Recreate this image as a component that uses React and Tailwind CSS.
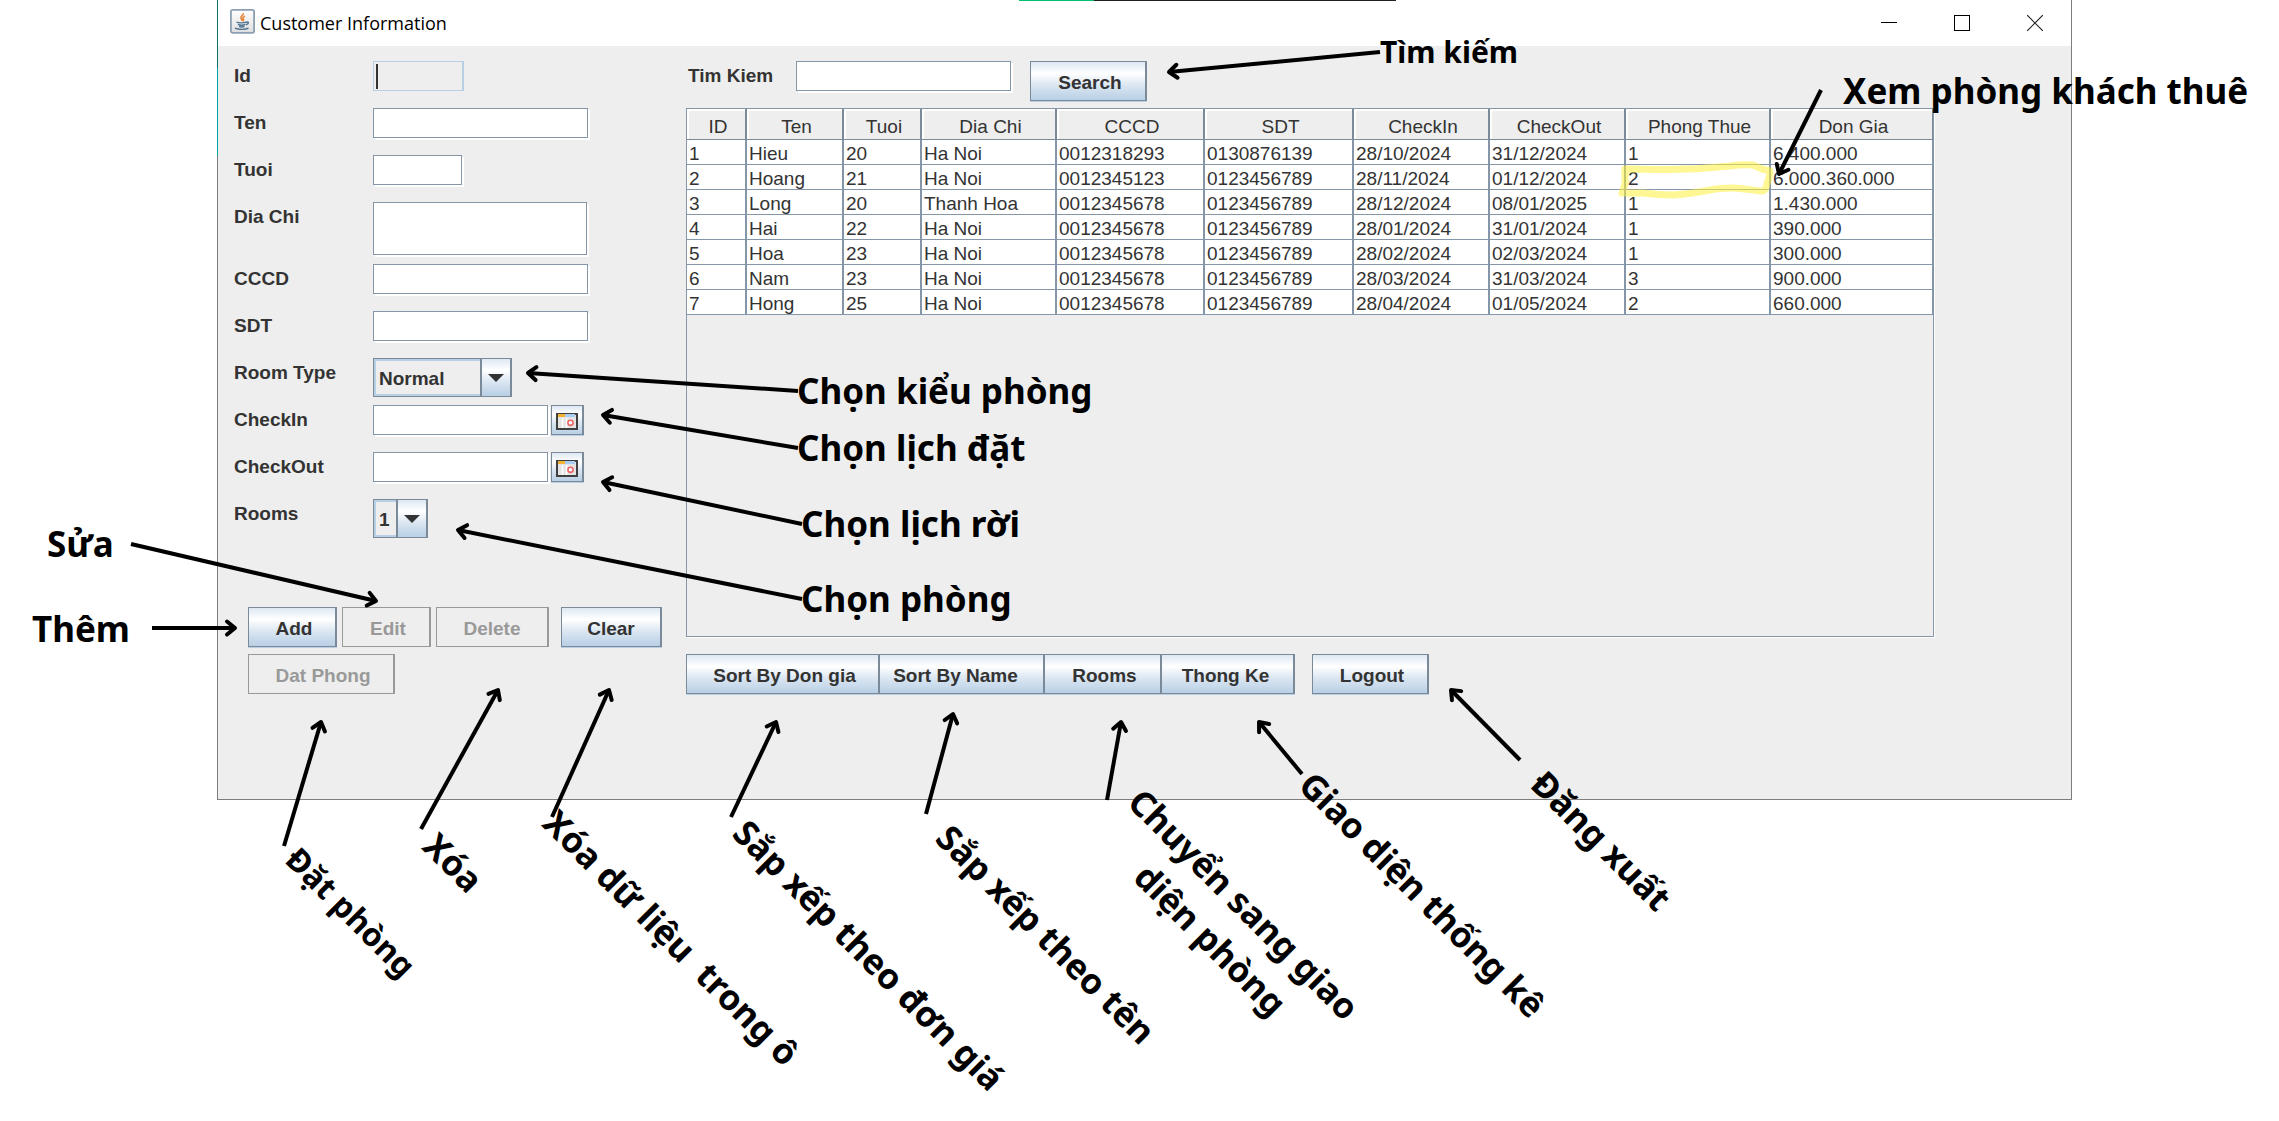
import React from "react";

const columns = [
  { name: "ID", width: "w-[60px]" },
  { name: "Ten", width: "w-[97px]" },
  { name: "Tuoi", width: "w-[78px]" },
  { name: "Dia Chi", width: "w-[135px]" },
  { name: "CCCD", width: "w-[148px]" },
  { name: "SDT", width: "w-[149px]" },
  { name: "CheckIn", width: "w-[136px]" },
  { name: "CheckOut", width: "w-[136px]" },
  { name: "Phong Thue", width: "w-[145px]" },
  { name: "Don Gia", width: "w-auto" },
];

const rows = [
  ["1", "Hieu", "20", "Ha Noi", "0012318293", "0130876139", "28/10/2024", "31/12/2024", "1", "6.400.000"],
  ["2", "Hoang", "21", "Ha Noi", "0012345123", "0123456789", "28/11/2024", "01/12/2024", "2", "6.000.360.000"],
  ["3", "Long", "20", "Thanh Hoa", "0012345678", "0123456789", "28/12/2024", "08/01/2025", "1", "1.430.000"],
  ["4", "Hai", "22", "Ha Noi", "0012345678", "0123456789", "28/01/2024", "31/01/2024", "1", "390.000"],
  ["5", "Hoa", "23", "Ha Noi", "0012345678", "0123456789", "28/02/2024", "02/03/2024", "1", "300.000"],
  ["6", "Nam", "23", "Ha Noi", "0012345678", "0123456789", "28/03/2024", "31/03/2024", "3", "900.000"],
  ["7", "Hong", "25", "Ha Noi", "0012345678", "0123456789", "28/04/2024", "01/05/2024", "2", "660.000"],
];

const notes = [
  { text: "Chọn kiểu phòng", place: "left-[797px] top-[367px]" },
  { text: "Chọn lịch đặt", place: "left-[797px] top-[424px]" },
  { text: "Chọn lịch rời", place: "left-[801px] top-[500px]" },
  { text: "Chọn phòng", place: "left-[801px] top-[575px]" },
  { text: "Xem phòng khách thuê", place: "left-[1843px] top-[67px]" },
  { text: "Sửa", place: "left-[47px] top-[520px]" },
  { text: "Thêm", place: "left-[32px] top-[605px]" },
];

const slantedNotes = [
  { text: "Đặt phòng", place: "left-[292px] top-[829px] text-[32px]" },
  { text: "Xóa", place: "left-[430px] top-[815px] text-[35px]" },
  { text: "Xóa dữ liệu  trong ô", place: "left-[550px] top-[792px] text-[35px]" },
  { text: "Sắp xếp theo đơn giá", place: "left-[740px] top-[802px] text-[35px]" },
  { text: "Sắp xếp theo tên", place: "left-[943px] top-[807px] text-[35px]" },
  { text: "Chuyển sang giao", place: "left-[1135px] top-[771px] text-[35px]" },
  { text: "diện phòng", place: "left-[1141px] top-[846px] text-[35px]" },
  { text: "Giao diện thống kê", place: "left-[1306px] top-[754px] text-[35px]" },
  { text: "Đăng xuất", place: "left-[1538px] top-[753px] text-[35px]" },
];

const arrows = [
  [1380, 52, 1169, 72],
  [1821, 90, 1779, 174],
  [798, 391, 528, 373],
  [798, 448, 603, 415],
  [802, 524, 603, 482],
  [802, 599, 458, 530],
  [131, 544, 376, 601],
  [152, 628, 235, 628],
  [284, 846, 321, 722],
  [421, 829, 498, 690],
  [552, 817, 609, 690],
  [731, 817, 776, 722],
  [926, 814, 953, 714],
  [1107, 800, 1121, 722],
  [1302, 774, 1259, 722],
  [1520, 760, 1451, 690],
];

function Arrow({ line }) {
  const [x1, y1, x2, y2] = line;
  const length = Math.hypot(x2 - x1, y2 - y1);
  const angle = (Math.atan2(y2 - y1, x2 - x1) * 180) / Math.PI;
  return (
    <g transform={`translate(${x1} ${y1}) rotate(${angle})`} fill="none" stroke="#000" strokeWidth="4">
      <path d={`M0 0H${length}`} />
      <path d={`M${length - 8} -6.5L${length} 0L${length - 8} 6.5`} strokeLinecap="round" strokeLinejoin="round" />
    </g>
  );
}

function JavaIcon() {
  return (
    <svg className="h-[25px] w-[25px]" viewBox="0 0 25 25" aria-hidden="true">
      <defs>
        <linearGradient id="java-bg" x1="0" y1="0" x2="0" y2="1">
          <stop offset="0" stopColor="#fff" />
          <stop offset="1" stopColor="#dedede" />
        </linearGradient>
      </defs>
      <rect x="0.9" y="0.9" width="23.2" height="23" rx="1.8" fill="url(#java-bg)" stroke="#8ba0b3" strokeWidth="1.8" />
      <path d="M12.8 4.3c1.8 1.7-3.2 3-1.8 5.2.5.8 1.4 1.4 1 2.6M15 7.2c-2.4 1-2.6 2-1.7 2.9.6.7.2 1.5-.6 2" fill="none" stroke="#e8873a" strokeWidth="1.6" />
      <path d="M6.5 13.2c2 .9 7.5.9 9.7 0M8 15.4c2 .8 5.6.8 7.3 0M9 17.4c1.6.6 4 .6 5.5 0M16.3 13.2c3-.8 2.6 2-.4 2.6" fill="none" stroke="#4f7391" strokeWidth="1.4" />
      <path d="M5 19.2c3 1.6 11 1.5 13.5 0" fill="none" stroke="#4f7391" strokeWidth="1.4" />
    </svg>
  );
}

function CalendarIcon() {
  return (
    <svg className="h-[17px] w-[22px]" viewBox="0 0 22 17" aria-hidden="true">
      <rect x="1" y="1" width="20" height="15" fill="#e4e4e4" stroke="#3f3f3f" strokeWidth="2" />
      <rect x="2" y="1" width="7" height="3" fill="#f5b335" />
      <rect x="9" y="1" width="10" height="3" fill="#a9ccf5" />
      <path d="M6.5 5v10M10.5 5v10" stroke="#fff" strokeWidth="1.5" />
      <circle cx="14.5" cy="9.8" r="2.6" fill="#fff" stroke="#ef6666" strokeWidth="1.6" />
    </svg>
  );
}

const face = "bg-[linear-gradient(to_bottom,#dde8f3_0%,#ffffff_30%,#dce7f2_60%,#b8cfe5_100%)]";
const fieldStyle = "border border-[#8496a8] bg-white px-1 text-[19px] outline-none shadow-[2px_2px_0_#fff]";

function Button({ children, className = "", disabled }) {
  const tone = disabled
    ? "border-[#999999] text-[#999999]"
    : "border-[#7a8a99] text-[#333333] shadow-[0_1px_0_#b8cfe5] " + face;
  return (
    <button type="button" disabled={disabled} className={`h-10 border border-r-2 pt-[3px] text-[19px] leading-6 font-bold ${tone} ${className}`}>
      {children}
    </button>
  );
}

function Row({ id, label, tall, children }) {
  return (
    <div className={`flex items-start ${tall ? "h-[62px]" : "h-[47px]"}`}>
      <label htmlFor={id} className="w-[139px] shrink-0 font-bold leading-[30px]">
        {label}
      </label>
      {children}
    </div>
  );
}

function Combo({ id, width, options }) {
  return (
    <div className={`relative h-[39px] ${width}`}>
      <select id={id} className="h-full w-full appearance-none border border-r-2 border-[#7a8a99] bg-[#eeeeee] pt-[3px] pl-[5px] text-[19px] font-bold text-[#333333] outline-none shadow-[inset_1px_1px_0_1px_#b8cfe5,inset_0_-2px_0_#b8cfe5]">
        {options.map((o) => (
          <option key={o}>{o}</option>
        ))}
      </select>
      <span className={`pointer-events-none absolute top-px right-[2px] bottom-px flex w-[30px] items-center justify-center border-l-2 border-[#7a8a99] ${face}`}>
        <svg className="h-2 w-4" viewBox="0 0 16 8" aria-hidden="true">
          <path d="M0 0H16L8 8Z" fill="#333" />
        </svg>
      </span>
    </div>
  );
}

function DateField({ id, label }) {
  return (
    <Row id={id} label={label}>
      <input id={id} type="text" className={`h-[30px] w-[175px] ${fieldStyle}`} />
      <button type="button" aria-label={`${label} calendar`} className={`ml-[3px] flex h-[30px] w-[33px] items-center justify-center border border-r-2 border-[#7a8a99] pt-0.5 shadow-[0_1px_0_#b8cfe5] ${face}`}>
        <CalendarIcon />
      </button>
    </Row>
  );
}

export default function App() {
  return (
    <div className="relative min-h-screen overflow-hidden bg-white">
      <div className="flex pr-[207px]">
        <div className="flex w-[218px] shrink-0 flex-col items-end" aria-hidden="true">
          <div className="h-[68px] w-px bg-[#0b6f70]" />
          <div className="h-[88px] w-px bg-[#00a5a5]" />
          <div className="w-px grow bg-[#7d7d7d]" />
        </div>
        <main className="min-w-0 grow border-r border-b border-[#7d7d7d] bg-[#eeeeee] font-['Liberation_Sans',Arial,sans-serif] text-[19px] text-[#333333]">
          <header className="flex h-[46px] items-center bg-white pl-3">
            <div className="-mt-1 flex items-center gap-[5px]">
              <JavaIcon />
              <h1 className="pt-[3px] font-['Open_Sans','Segoe_UI',sans-serif] text-[18px] leading-6 text-black">Customer Information</h1>
            </div>
            <div className="mr-7 ml-auto flex gap-[57px]">
              <button type="button" aria-label="Minimize">
                <svg className="h-4 w-4" viewBox="0 0 16 16"><path d="M0 7.5H16" stroke="#000" /></svg>
              </button>
              <button type="button" aria-label="Maximize">
                <svg className="h-4 w-4" viewBox="0 0 16 16"><rect x="0.5" y="0.5" width="15" height="15" fill="none" stroke="#000" /></svg>
              </button>
              <button type="button" aria-label="Close">
                <svg className="h-4 w-4" viewBox="0 0 16 16"><path d="M0 0L16 16M16 0L0 16" stroke="#222" strokeWidth="1.2" /></svg>
              </button>
            </div>
          </header>

          <div className="flex pt-[15px] pb-[105px]">
            <form className="w-[468px] shrink-0 pl-4">
              <Row id="id" label="Id">
                <div className="relative">
                  <input id="id" type="text" readOnly className="block h-[30px] w-[91px] border border-r-2 border-[#b8cfe5] bg-[#eeeeee] px-1 outline-none" />
                  <span className="pointer-events-none absolute top-[3px] left-[3px] h-[25px] w-0.5 bg-[#333333]" />
                </div>
              </Row>
              <Row id="ten" label="Ten">
                <input id="ten" type="text" className={`h-[30px] w-[215px] ${fieldStyle}`} />
              </Row>
              <Row id="tuoi" label="Tuoi">
                <input id="tuoi" type="text" className={`h-[30px] w-[89px] ${fieldStyle}`} />
              </Row>
              <Row id="diachi" label="Dia Chi" tall>
                <textarea id="diachi" className={`h-[53px] w-[214px] resize-none ${fieldStyle}`} />
              </Row>
              <Row id="cccd" label="CCCD">
                <input id="cccd" type="text" className={`h-[30px] w-[215px] ${fieldStyle}`} />
              </Row>
              <Row id="sdt" label="SDT">
                <input id="sdt" type="text" className={`h-[30px] w-[215px] ${fieldStyle}`} />
              </Row>
              <Row id="roomtype" label="Room Type">
                <Combo id="roomtype" width="w-[139px]" options={["Normal", "Vip"]} />
              </Row>
              <DateField id="checkin" label="CheckIn" />
              <DateField id="checkout" label="CheckOut" />
              <Row id="rooms" label="Rooms">
                <Combo id="rooms" width="w-[55px]" options={["1", "2", "3"]} />
              </Row>
              <div className="mt-[61px] flex gap-[5px] pl-3.5">
                <Button className="w-[89px] pl-1">Add</Button>
                <Button className="w-[89px] pl-1" disabled>Edit</Button>
                <Button className="w-[113px]" disabled>Delete</Button>
                <Button className="ml-[7px] w-[101px]">Clear</Button>
              </div>
              <div className="mt-[7px] pl-3.5">
                <Button className="w-[147px] pl-1" disabled>Dat Phong</Button>
              </div>
            </form>

            <section className="mr-[137px] flex min-w-0 grow flex-col">
              <div className="flex h-[47px] items-start">
                <label htmlFor="search" className="w-[110px] pl-0.5 font-bold leading-[30px]">Tim Kiem</label>
                <input id="search" type="text" className={`h-[30px] w-[215px] ${fieldStyle}`} />
                <Button className="ml-[19px] w-[117px] pl-1">Search</Button>
              </div>
              <div className="h-[529px] border border-[#8496a8] shadow-[1px_1px_0_#fff]">
                <table className="w-full table-fixed border-separate border-spacing-0 text-left">
                  <thead>
                    <tr>
                      {columns.map((c) => (
                        <th key={c.name} className={`h-[31px] border-r-2 border-b border-[#7a8a99] p-0 pt-[5px] pl-1 text-center leading-6 font-normal shadow-[inset_2px_2px_0_#fff] last:border-r ${c.width}`}>
                          {c.name}
                        </th>
                      ))}
                    </tr>
                  </thead>
                  <tbody className="bg-white">
                    {rows.map((r) => (
                      <tr key={r[0]}>
                        {r.map((cell, i) => (
                          <td key={columns[i].name} className="h-[25px] border-r-2 border-b border-[#8496a8] p-0 pt-[3px] pl-[2px] leading-[21px] whitespace-nowrap last:border-r">
                            {cell}
                          </td>
                        ))}
                      </tr>
                    ))}
                  </tbody>
                </table>
              </div>
              <div className="mt-[17px] flex">
                <Button className="w-[194px] pl-1">Sort By Don gia</Button>
                <Button className="w-[165px] border-l-0 pr-3">Sort By Name</Button>
                <Button className="w-[117px] border-l-0 pl-1">Rooms</Button>
                <Button className="w-[133px] border-l-0 pr-1">Thong Ke</Button>
                <Button className="ml-[17px] w-[117px] pl-1">Logout</Button>
              </div>
            </section>
          </div>
        </main>
      </div>

      <div className="pointer-events-none absolute top-0 left-[1019px] flex h-px" aria-hidden="true">
        <span className="w-[75px] bg-[#00c070]" />
        <span className="w-[302px] bg-[#202020]" />
      </div>

      <svg className="pointer-events-none absolute top-0 left-0 h-[1121px] w-[2279px]" viewBox="0 0 2279 1121" aria-hidden="true">
        <path
          d="M1625 169C1645 169 1665 170 1683 169C1700 169 1715 167 1730 166Q1742 164 1753 165L1762 169L1770 171C1770 176 1768 180 1767 184Q1766 192 1760 191C1750 190 1742 188 1733 188Q1720 188 1710 190Q1690 194 1673 195Q1658 195 1643 193L1622 193C1624 187 1626 184 1625 180Z"
          fill="none"
          stroke="#fdf03c"
          strokeOpacity="0.55"
          strokeWidth="7"
          strokeLinejoin="round"
        />
        {arrows.map((a) => (
          <Arrow key={a.join("-")} line={a} />
        ))}
      </svg>

      <div className="pointer-events-none font-['Noto_Sans',sans-serif] text-[35px] leading-[48px] font-bold whitespace-pre text-black">
        <span className="absolute top-[28px] left-[1380px] text-[30px]">Tìm kiếm</span>
        {notes.map((n) => (
          <span key={n.text} className={`absolute ${n.place}`}>{n.text}</span>
        ))}
        {slantedNotes.map((n) => (
          <span key={n.text} className={`absolute origin-left rotate-45 ${n.place}`}>{n.text}</span>
        ))}
      </div>
    </div>
  );
}
